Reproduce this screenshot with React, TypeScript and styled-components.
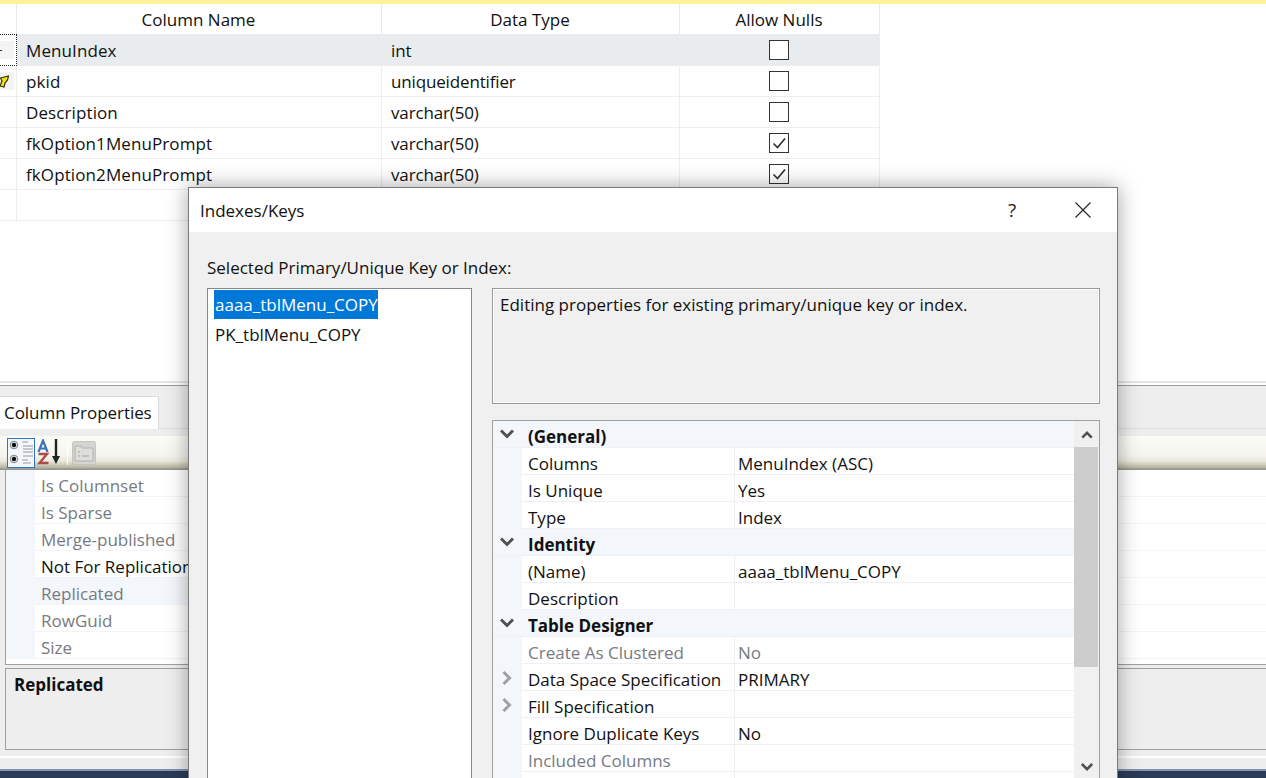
import { Fragment } from "react";
import styled, { createGlobalStyle } from "styled-components";

const uiFont = `"Open Sans", "Noto Sans", "Liberation Sans", sans-serif`;

const Global = createGlobalStyle`
	html, body {
		margin: 0;
		padding: 0;
		background: #ffffff;
		overflow: hidden;
	}
	body {
		font-family: ${uiFont};
		font-size: 17px;
		color: #111111;
	}
	* {
		box-sizing: border-box;
	}
`;

const Page = styled.div`
	position: relative;
	width: 1266px;
	height: 778px;
	overflow: hidden;
	display: flex;
	flex-direction: column;
	background: #ffffff;
`;

const TopStrip = styled.div`
	height: 4px;
	background: #fff29d;
	flex: none;
`;

const TableArea = styled.div`
	height: 377px;
	flex: none;
`;

const Table = styled.div`
	width: 880px;
	display: grid;
	grid-template-columns: 17px 365px 298px 200px;
`;

const HeadCell = styled.div`
	height: 30px;
	display: flex;
	align-items: center;
	justify-content: center;
	border-right: 1px solid #e8e8e8;
	padding-top: 1px;
	padding-right: 1px;
`;

const Selector = styled.div<{ $current?: boolean }>`
	height: ${(p) => (p.$current ? "32px" : "31px")};
	display: flex;
	align-items: center;
	border-right: ${(p) => (p.$current ? "1px dotted #222222" : "1px solid #ededed")};
	border-bottom: ${(p) => (p.$current ? "1px dotted #222222" : "1px solid #ededed")};
	border-top: ${(p) => (p.$current ? "1px dotted #222222" : "none")};
`;

const SelectorMark = styled.div`
	width: 14px;
	height: 18px;
	background: #f3f3f3;
	display: flex;
	align-items: center;
`;

const Cell = styled.div<{ $current?: boolean; $center?: boolean; $track?: number }>`
	height: ${(p) => (p.$current ? "32px" : "31px")};
	display: flex;
	align-items: center;
	justify-content: ${(p) => (p.$center ? "center" : "flex-start")};
	padding: 2px 9px ${(p) => (p.$current ? "0" : "1px")};
	letter-spacing: ${(p) => p.$track ?? 0}px;
	background: ${(p) => (p.$current ? "#e9ecee" : "#ffffff")};
	border-right: 1px solid #ededed;
	border-bottom: 1px solid #ededed;
`;

const CheckBox = styled.div`
	width: 20px;
	height: 20px;
	background: #ffffff;
	border: 1px solid #333333;
	display: flex;
	align-items: center;
	justify-content: center;
	margin: -2px 2px 0 0;
`;

const Splitter = styled.div`
	height: 5px;
	flex: none;
	background: #ffffff;
	border-top: 2px solid #e4e4e4;
	border-bottom: 1px solid #9a9a9a;
`;

const TabStrip = styled.div`
	height: 43px;
	flex: none;
	background: #eeeeee;
	border-bottom: 1px solid #dcdcdc;
	display: flex;
	align-items: flex-end;
`;

const Tab = styled.div`
	width: 159px;
	height: 33px;
	background: #ffffff;
	border-top: 1px solid #dcdcdc;
	border-right: 1px solid #dcdcdc;
	margin-bottom: -1px;
	padding: 0 0 2px 4px;
	letter-spacing: -0.05px;
	display: flex;
	align-items: center;
	white-space: nowrap;
`;

const ToolGap = styled.div`
	height: 7px;
	flex: none;
	background: #eeeeee;
`;

const Toolbar = styled.div`
	height: 34px;
	flex: none;
	display: flex;
	align-items: center;
	padding: 0 0 1px 7px;
	background: linear-gradient(#fcfcf7 0%, #f5f4ee 58%, #e9e8da 74%, #b3b29c 94%, #8f8f8f 97%, #9a9a9a 100%);
`;

const ToolButton = styled.div<{ $active?: boolean; $width: number }>`
	width: ${(p) => p.$width}px;
	height: 30px;
	display: flex;
	align-items: center;
	justify-content: center;
	margin-right: ${(p) => (p.$active ? "1px" : "0")};
	background: ${(p) => (p.$active ? "#f3f6fb" : "transparent")};
	border: ${(p) => (p.$active ? "1px solid #2f74c0" : "none")};
`;

const ToolSep = styled.div`
	width: 1px;
	height: 24px;
	background: #ffffff;
	margin: 0 3px;
`;

const PanelBody = styled.div`
	height: 195px;
	flex: none;
	background: #eeeeee;
	padding: 0 0 0 5px;
`;

const PropList = styled.div`
	height: 195px;
	background: #ffffff;
	border-left: 1px solid #a0a0a0;
	border-bottom: 1px solid #a0a0a0;
	display: grid;
	grid-template-columns: 29px 400px 1fr;
	grid-auto-rows: 27px;
	align-content: start;
`;

const PropGutter = styled.div`
	background: #f3f6fb;
`;

const PropName = styled.div<{ $dim?: boolean; $selected?: boolean }>`
	display: flex;
	align-items: center;
	padding: 4px 0 0 6px;
	background: ${(p) => (p.$selected ? "#f3f6fb" : "#ffffff")};
	color: ${(p) => (p.$dim ? "#777a80" : "#111111")};
	border-bottom: 1px solid #f3f3f8;
	white-space: nowrap;
`;

const PropValue = styled.div`
	border-bottom: 1px solid #f3f3f8;
`;

const HelpWrap = styled.div`
	height: 85px;
	flex: none;
	background: #eeeeee;
	padding: 3px 0 0 5px;
`;

const HelpBox = styled.div`
	height: 82px;
	border: 1px solid #a0a0a0;
	border-right: none;
	padding: 4px 8px;
	font-weight: 700;
`;

const StatusGap = styled.div`
	height: 19px;
	flex: none;
	background: #eeeeee;
	border-top: 6px solid #eeeeee;
	box-shadow: inset 0 2px 0 #ffffff;
`;

const StatusBar = styled.div`
	flex: 1;
	background: #2b3a56;
	border-top: 2px solid #8592b0;
`;

/* dialog floats over the designer */
const Dialog = styled.div`
	position: absolute;
	left: 188px;
	top: 187px;
	width: 930px;
	height: 600px;
	background: #f0f0f0;
	border: 1px solid #7a7a7a;
	box-shadow: 0 0 20px rgba(0, 0, 0, 0.36);
	display: flex;
	flex-direction: column;
`;

const DialogTitle = styled.div`
	height: 44px;
	flex: none;
	background: #ffffff;
	display: flex;
	align-items: center;
	padding-left: 11px;
`;

const TitleText = styled.div`
	flex: 1;
`;

const HelpGlyph = styled.div`
	width: 18px;
	text-align: center;
	font-size: 19px;
	color: #222222;
	margin-right: 54px;
`;

const CloseButton = styled.div`
	width: 16px;
	height: 16px;
	margin-right: 26px;
	display: flex;
`;

const DialogBody = styled.div`
	flex: 1;
	padding: 24px 17px 0 18px;
`;

const Caption = styled.div`
	height: 32px;
	white-space: nowrap;
`;

const Columns = styled.div`
	display: grid;
	grid-template-columns: 265px 608px;
	gap: 20px;
	align-items: start;
`;

const ListBox = styled.div`
	height: 520px;
	background: #ffffff;
	border: 1px solid #828790;
	padding: 1px 6px;
`;

const ListItem = styled.div<{ $selected?: boolean }>`
	height: 29px;
	width: ${(p) => (p.$selected ? "164px" : "auto")};
	margin-top: ${(p) => (p.$selected ? "0" : "1px")};
	padding-left: 1px;
	display: flex;
	align-items: center;
	white-space: nowrap;
	background: ${(p) => (p.$selected ? "#0078d7" : "transparent")};
	color: ${(p) => (p.$selected ? "#ffffff" : "#111111")};
`;

const RightColumn = styled.div`
	display: flex;
	flex-direction: column;
	gap: 16px;
`;

const InfoBox = styled.div`
	height: 116px;
	border: 1px solid #9a9a9a;
	box-shadow: inset -1px -1px 0 #ffffff, inset 1px 1px 0 #ffffff;
	padding: 4px 7px;
`;

const GridBox = styled.div`
	height: 400px;
	background: #ffffff;
	border: 1px solid #a0a0a0;
	display: grid;
	grid-template-columns: 1fr 25px;
`;

const Rows = styled.div`
	display: flex;
	flex-direction: column;
`;

const Group = styled.div`
	height: 27px;
	flex: none;
	display: flex;
	align-items: stretch;
	background: #f3f6fb;
	border-bottom: 1px solid #f0f0f4;
	font-weight: 700;
`;

const GroupLabel = styled.div`
	display: flex;
	align-items: center;
	padding: 4px 0 0 6px;
`;

const Row = styled.div`
	height: 27px;
	flex: none;
	display: flex;
	background: #ffffff;
`;

const Gutter = styled.div`
	width: 29px;
	flex: none;
	display: flex;
	align-items: center;
	justify-content: center;
	background: #f3f6fb;
	padding-right: 2px;
`;

const NameCell = styled.div<{ $dim?: boolean }>`
	width: 213px;
	flex: none;
	display: flex;
	align-items: center;
	padding: 4px 0 0 6px;
	white-space: nowrap;
	color: ${(p) => (p.$dim ? "#777a80" : "#111111")};
	border-bottom: 1px solid #f0f0f4;
	border-right: 1px solid #f0f0f4;
`;

const ValueCell = styled.div<{ $dim?: boolean }>`
	flex: 1;
	display: flex;
	align-items: center;
	padding: 4px 0 0 3px;
	white-space: nowrap;
	color: ${(p) => (p.$dim ? "#777a80" : "#111111")};
	border-bottom: 1px solid #f0f0f4;
`;

const ScrollBar = styled.div`
	background: #f0f0f0;
	display: flex;
	flex-direction: column;
	height: 358px;
	align-items: stretch;
`;

const ScrollArrow = styled.div`
	height: 26px;
	flex: none;
	display: flex;
	align-items: center;
	justify-content: center;
	padding-top: 2px;
`;

const ScrollThumb = styled.div`
	height: 220px;
	flex: none;
	background: #cdcdcd;
	margin-right: 1px;
`;

const ScrollTrack = styled.div`
	flex: 1;
`;

function Chevron({ dir, color = "#505050", size = 14 }: { dir: "up" | "down" | "right"; color?: string; size?: number }) {
	const d = dir === "up" ? "M1.5 10 L7 4.5 L12.5 10" : dir === "down" ? "M1 3.5 L7 9.5 L13 3.5" : "M3.5 1 L9.5 7 L3.5 13";
	return (
		<svg width={size} height={size} viewBox="0 0 14 14">
			<path d={d} fill="none" stroke={color} strokeWidth="3" />
		</svg>
	);
}

function Tick() {
	return (
		<svg width="16" height="16" viewBox="0 0 16 16">
			<path d="M2.5 8.5 L6.5 12.5 L14 3.5" fill="none" stroke="#333333" strokeWidth="1.7" />
		</svg>
	);
}

function KeyIcon() {
	return (
		<svg width="9" height="13" viewBox="0 0 9 13">
			<path d="M0.5 3 L8.5 1 L7.5 5 L5 8 L4 12 L0 11 L2 6 Z" fill="#f5e11c" stroke="#333300" strokeWidth="1.2" />
		</svg>
	);
}

function RowPointer() {
	return (
		<svg width="3" height="3" viewBox="0 0 3 3">
			<path d="M0 1.5 H2" stroke="#333333" strokeWidth="1" />
		</svg>
	);
}

function CategorizedIcon() {
	return (
		<svg width="26" height="28" viewBox="0 0 26 28">
			<circle cx="6" cy="6" r="3.8" fill="#dfe6e6" stroke="#7a8a8a" />
			<circle cx="6" cy="6" r="2.2" fill="#111111" />
			<circle cx="6" cy="20" r="3.8" fill="#dfe6e6" stroke="#7a8a8a" />
			<circle cx="6" cy="20" r="2.2" fill="#111111" />
			<path d="M14 3h6M15 7h10M15 10h10M15 13h10M15 17h10M14 21h6M15 24h8" stroke="#9a9a9a" strokeWidth="1.2" />
		</svg>
	);
}

function SortIcon() {
	return (
		<svg width="26" height="28" viewBox="0 0 26 28">
			<path d="M1.5 13 L6 1.5 L10.5 13 M3.5 9.5 h5" fill="none" stroke="#3f73b8" strokeWidth="2.2" />
			<path d="M1.5 15 h8.5 L2.5 24 h9" fill="none" stroke="#b04a4a" strokeWidth="2.4" />
			<path d="M19 0 V19" stroke="#222222" strokeWidth="2.4" />
			<path d="M15 17 h8 L19 25 Z" fill="#222222" />
		</svg>
	);
}

function PagesIcon() {
	return (
		<svg width="24" height="24" viewBox="0 0 24 24">
			<rect x="0.5" y="0.5" width="23" height="23" rx="2" fill="#d4d4d0" stroke="#c4c4c0" />
			<path d="M3 5h6l1 2h11v13H3Z" fill="#dededa" stroke="#b0b0ac" />
			<path d="M6 11h2M6 15h2M10 15h7" stroke="#a0a09c" strokeWidth="1" />
		</svg>
	);
}

const columns = [
	{ name: "MenuIndex", type: "int", nulls: false },
	{ name: "pkid", type: "uniqueidentifier", nulls: false, key: true },
	{ name: "Description", type: "varchar(50)", nulls: false },
	{ name: "fkOption1MenuPrompt", type: "varchar(50)", nulls: true },
	{ name: "fkOption2MenuPrompt", type: "varchar(50)", nulls: true },
];

const columnProps = [
	{ name: "Is Columnset", dim: true },
	{ name: "Is Sparse", dim: true },
	{ name: "Merge-published", dim: true },
	{ name: "Not For Replication", dim: false },
	{ name: "Replicated", dim: true, selected: true },
	{ name: "RowGuid", dim: true },
	{ name: "Size", dim: true },
];

type IndexRow =
	| { group: string }
	| { name: string; value?: string; dim?: boolean; expand?: boolean };

const indexRows: IndexRow[] = [
	{ group: "(General)" },
	{ name: "Columns", value: "MenuIndex (ASC)" },
	{ name: "Is Unique", value: "Yes" },
	{ name: "Type", value: "Index" },
	{ group: "Identity" },
	{ name: "(Name)", value: "aaaa_tblMenu_COPY" },
	{ name: "Description" },
	{ group: "Table Designer" },
	{ name: "Create As Clustered", value: "No", dim: true },
	{ name: "Data Space Specification", value: "PRIMARY", expand: true },
	{ name: "Fill Specification", expand: true },
	{ name: "Ignore Duplicate Keys", value: "No" },
	{ name: "Included Columns", dim: true },
	{ name: "" },
];

function App() {
	return (
		<Page>
			<Global />
			<TopStrip />
			<TableArea>
				<Table>
					<HeadCell />
					<HeadCell>Column Name</HeadCell>
					<HeadCell>Data Type</HeadCell>
					<HeadCell>Allow Nulls</HeadCell>
					{columns.map((c, i) => (
						<Fragment key={c.name}>
							<Selector $current={i === 0}>
								{i === 0 ? (
									<SelectorMark>
										<RowPointer />
									</SelectorMark>
								) : null}
								{c.key ? (
									<SelectorMark>
										<KeyIcon />
									</SelectorMark>
								) : null}
							</Selector>
							<Cell $current={i === 0} $track={0.1}>{c.name}</Cell>
							<Cell $current={i === 0} $track={-0.15}>{c.type}</Cell>
							<Cell $current={i === 0} $center>
								<CheckBox>{c.nulls ? <Tick /> : null}</CheckBox>
							</Cell>
						</Fragment>
					))}
					<Selector />
					<Cell />
					<Cell />
					<Cell />
				</Table>
			</TableArea>
			<Splitter />
			<TabStrip>
				<Tab>Column Properties</Tab>
			</TabStrip>
			<ToolGap />
			<Toolbar>
				<ToolButton $active $width={28}>
					<CategorizedIcon />
				</ToolButton>
				<ToolButton $width={28}>
					<SortIcon />
				</ToolButton>
				<ToolSep />
				<ToolButton $width={25}>
					<PagesIcon />
				</ToolButton>
			</Toolbar>
			<PanelBody>
				<PropList>
					{columnProps.map((p) => (
						<Fragment key={p.name}>
							<PropGutter />
							<PropName $dim={p.dim} $selected={p.selected}>{p.name}</PropName>
							<PropValue />
						</Fragment>
					))}
				</PropList>
			</PanelBody>
			<HelpWrap>
				<HelpBox>Replicated</HelpBox>
			</HelpWrap>
			<StatusGap />
			<StatusBar />
			<Dialog>
				<DialogTitle>
					<TitleText>Indexes/Keys</TitleText>
					<HelpGlyph>?</HelpGlyph>
					<CloseButton>
						<svg width="16" height="16" viewBox="0 0 16 16">
							<path d="M0.5 0.5 L15.5 15.5 M15.5 0.5 L0.5 15.5" stroke="#222222" strokeWidth="1.1" />
						</svg>
					</CloseButton>
				</DialogTitle>
				<DialogBody>
					<Caption>Selected Primary/Unique Key or Index:</Caption>
					<Columns>
						<ListBox>
							<ListItem $selected>aaaa_tblMenu_COPY</ListItem>
							<ListItem>PK_tblMenu_COPY</ListItem>
						</ListBox>
						<RightColumn>
							<InfoBox>Editing properties for existing primary/unique key or index.</InfoBox>
							<GridBox>
								<Rows>
									{indexRows.map((r, i) =>
										"group" in r ? (
											<Group key={i}>
												<Gutter>
													<Chevron dir="down" />
												</Gutter>
												<GroupLabel>{r.group}</GroupLabel>
											</Group>
										) : (
											<Row key={i}>
												<Gutter>{r.expand ? <Chevron dir="right" color="#a0a0a0" /> : null}</Gutter>
												<NameCell $dim={r.dim}>{r.name}</NameCell>
												<ValueCell $dim={r.dim}>{r.value}</ValueCell>
											</Row>
										)
									)}
								</Rows>
								<ScrollBar>
									<ScrollArrow>
										<Chevron dir="up" size={12} />
									</ScrollArrow>
									<ScrollThumb />
									<ScrollTrack />
									<ScrollArrow>
										<Chevron dir="down" size={12} />
									</ScrollArrow>
								</ScrollBar>
							</GridBox>
						</RightColumn>
					</Columns>
				</DialogBody>
			</Dialog>
		</Page>
	);
}

export default App;
